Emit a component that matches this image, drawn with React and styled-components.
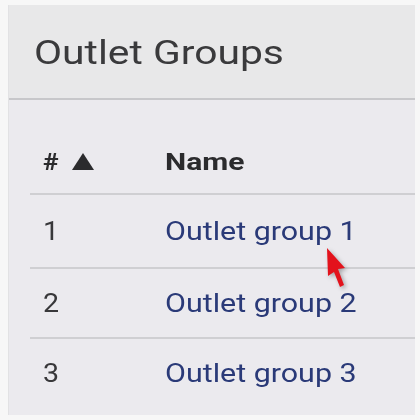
import React from "react";
import styled, { createGlobalStyle } from "styled-components";

const Global = createGlobalStyle`
  html, body { margin: 0; padding: 0; background: #f7f7f7; }
  body { font-family: Roboto, "Liberation Sans", sans-serif; }
`;

const Panel = styled.section`
  margin: 5px 0 0 9px;
  width: 406px;
  height: 410px;
  background: #ebeaee;
  box-shadow: -1px 0 0 #e2e2e4;
  position: relative;
  overflow: hidden;
`;

const PanelHeader = styled.header`
  height: 93px;
  display: flex;
  align-items: center;
  padding-left: 25px;
  background: #e8e8e9;
  border-bottom: 2px solid #c7c7ca;
`;

const Wide = styled.span`
  display: inline-block;
  transform: scaleX(${(p) => p.$x});
  transform-origin: left center;
`;

const Title = styled.h2`
  margin: 0;
  font-size: 34px;
  font-weight: 400;
  color: #3a3a3c;
`;

const Body = styled.div`
  padding: 30px 0 0 21px;
`;

const Table = styled.div`
  display: flex;
  flex-direction: column;
`;

const Row = styled.div`
  display: grid;
  grid-template-columns: 122px 1fr;
  align-items: center;
  height: ${(p) => p.$h}px;
  padding-left: 13px;
  border-bottom: ${(p) => (p.$last ? "none" : "2px solid #cfcfd2")};
`;

const HeadCell = styled.div`
  font-size: 24px;
  font-weight: 700;
  color: #2b2b2d;
  display: flex;
  align-items: center;
  gap: 15px;
`;

const Triangle = styled.span`
  width: 0;
  height: 0;
  border-left: 11px solid transparent;
  border-right: 11px solid transparent;
  border-bottom: 17px solid #2b2b2d;
`;

const NumCell = styled.div`
  font-size: 26px;
  color: #38383a;
`;

const LinkCell = styled.a`
  font-size: 26px;
  color: #2a3a78;
  text-decoration: none;
`;

const Cursor = styled.svg`
  position: absolute;
  left: 317px;
  top: 242px;
  filter: drop-shadow(2px 2px 2px rgba(0,0,0,0.3));
`;

const rows = [1, 2, 3];

export default function App() {
  return (
    <>
      <Global />
      <Panel>
        <PanelHeader>
          <Title>
            <Wide $x={1.2}>Outlet Groups</Wide>
          </Title>
        </PanelHeader>
        <Body>
          <Table>
            <Row $h={63}>
              <HeadCell>
                <Wide $x={1.1}>#</Wide> <Triangle />
              </HeadCell>
              <HeadCell>
                <Wide $x={1.25}>Name</Wide>
              </HeadCell>
            </Row>
            {rows.map((n, i) => (
              <Row key={n} $h={i === 0 ? 72 : 68} $last={i === rows.length - 1}>
                <NumCell>
                  <Wide $x={1.1}>{n}</Wide>
                </NumCell>
                <LinkCell href="#">
                  <Wide $x={1.17}>Outlet group {n}</Wide>
                </LinkCell>
              </Row>
            ))}
          </Table>
        </Body>
        <Cursor width="24" height="46" viewBox="0 0 24 46">
          <path d="M1 1 L19 21 L12 22 L18 38 L14 40 L8 25 L2 29 Z" fill="#e3121c" />
        </Cursor>
      </Panel>
    </>
  );
}
